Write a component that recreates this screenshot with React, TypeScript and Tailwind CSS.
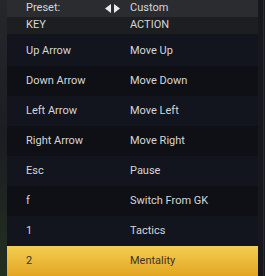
import React from "react";

const rows: [string, string][] = [
  ["Up Arrow", "Move Up"],
  ["Down Arrow", "Move Down"],
  ["Left Arrow", "Move Left"],
  ["Right Arrow", "Move Right"],
  ["Esc", "Pause"],
  ["f", "Switch From GK"],
  ["1", "Tactics"],
  ["2", "Mentality"],
];

export default function App() {
  return (
    <div
      className="w-[265px] h-[276px] flex overflow-hidden bg-[#111217] text-[11px] text-[#d6d6d8]"
      style={{ fontFamily: "Roboto, 'Open Sans', sans-serif" }}
    >
      <div className="w-[7px] bg-gradient-to-b from-[#25272b] via-[#1b1d22] to-[#23301f]" />
      <div className="flex-1 flex flex-col">
        <div className="h-[17px] bg-[#2a2c30] flex items-center">
          <span className="pl-[19px] w-[98px]">Preset:</span>
          <svg width="15" height="9" viewBox="0 0 15 9" className="mr-[10px]">
            <polygon points="0,4.5 6,0 6,9" fill="#ececee" />
            <polygon points="9,0 15,4.5 9,9" fill="#ececee" />
          </svg>
          <span>Custom</span>
        </div>
        <div className="h-[17px] bg-[#1d1e20] flex items-center">
          <span className="pl-[19px] w-[123px]">KEY</span>
          <span>ACTION</span>
        </div>
        <div className="h-[2px] bg-[#121420]" />
        {rows.map(([k, a], i) => {
          const selected = i === rows.length - 1;
          return (
            <div
              key={k}
              className={
                "h-[30px] flex items-center " +
                (selected
                  ? "bg-gradient-to-b from-[#f3cf50] to-[#e3a521] text-[#3d3322]"
                  : i % 2 === 1
                  ? "bg-[#0f1015]"
                  : "bg-[#12141e]")
              }
            >
              <span className="pl-[19px] w-[123px]">{k}</span>
              <span>{a}</span>
            </div>
          );
        })}
      </div>
      <div className="w-[7px] flex bg-[#16181d]">
        <div className="w-[5px]" />
        <div className="w-[1px] bg-[#2a2c31]" />
      </div>
    </div>
  );
}
